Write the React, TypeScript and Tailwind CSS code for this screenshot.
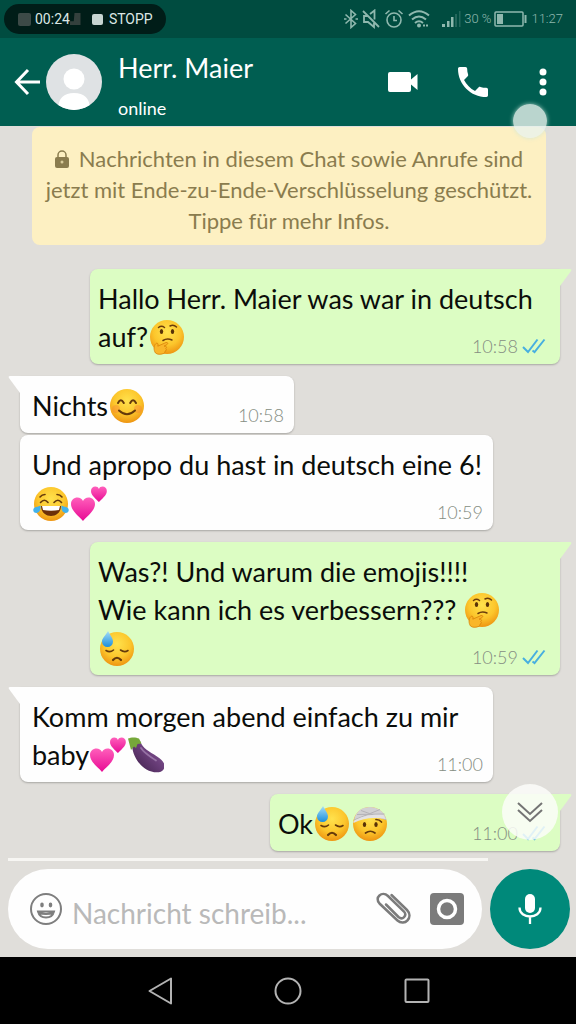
import React from 'react';

// --- Types ---
type EmojiName = 'thinking' | 'smile' | 'joy' | 'hearts' | 'sweat' | 'bandage' | 'eggplant';
type Part = string | { emoji: EmojiName };

interface Message {
  id: number;
  own: boolean;
  tail: boolean;
  time: string;
  width: string;
  spacing: string;
  lines: Part[][];
}

// --- Content ---
const e = (emoji: EmojiName): Part => ({ emoji });

const MESSAGES: Message[] = [
  {
    id: 1, own: true, tail: true, time: '10:58', width: 'w-[470px]', spacing: 'mt-6',
    lines: [['Hallo Herr. Maier was war in deutsch'], ['auf?', e('thinking')]],
  },
  {
    id: 2, own: false, tail: true, time: '10:58', width: 'w-[274px]', spacing: 'mt-3',
    lines: [['Nichts', e('smile')]],
  },
  {
    id: 3, own: false, tail: false, time: '10:59', width: 'w-[473px]', spacing: 'mt-0.5',
    lines: [['Und apropo du hast in deutsch eine 6!'], [e('joy'), e('hearts')]],
  },
  {
    id: 4, own: true, tail: true, time: '10:59', width: 'w-[470px]', spacing: 'mt-3',
    lines: [
      ['Was?! Und warum die emojis!!!!'],
      ['Wie kann ich es verbessern??? ', e('thinking')],
      [e('sweat')],
    ],
  },
  {
    id: 5, own: false, tail: true, time: '11:00', width: 'w-[473px]', spacing: 'mt-3',
    lines: [['Komm morgen abend einfach zu mir'], ['baby', e('hearts'), e('eggplant')]],
  },
  {
    id: 6, own: true, tail: true, time: '11:00', width: 'w-[290px]', spacing: 'mt-3',
    lines: [['Ok', e('sweat'), e('bandage')]],
  },
];

// --- Emojis ---
const Gradients = () => (
  <svg className="absolute h-0 w-0" aria-hidden="true">
    <defs>
      <radialGradient id="face" cx="50%" cy="35%" r="65%">
        <stop offset="0" stopColor="#ffe24d" />
        <stop offset="0.6" stopColor="#fcc62c" />
        <stop offset="1" stopColor="#ee9512" />
      </radialGradient>
      <linearGradient id="heart" x1="0" y1="0" x2="0" y2="1">
        <stop offset="0" stopColor="#ff5fbb" />
        <stop offset="1" stopColor="#e80a94" />
      </linearGradient>
      <linearGradient id="drop" x1="0" y1="0" x2="0" y2="1">
        <stop offset="0" stopColor="#a5def8" />
        <stop offset="1" stopColor="#1c8fdc" />
      </linearGradient>
      <linearGradient id="plum" x1="0" y1="1" x2="1" y2="0">
        <stop offset="0" stopColor="#3b1d45" />
        <stop offset="0.55" stopColor="#6b3f7b" />
        <stop offset="1" stopColor="#8d62a0" />
      </linearGradient>
    </defs>
  </svg>
);

const Face = () => <circle cx="18" cy="18" r="17" fill="url(#face)" />;
const HEART = 'M12 35C8 30 0 25 0 18C0 14 3 11.500 6.500 11.500c2.500 0 4.500 1.300 5.500 3.500c1-2.200 3-3.500 5.500-3.500c3.500 0 6.500 2.500 6.500 6.500C24 25 16 30 12 35z';

const DRAWINGS: Record<EmojiName, React.ReactNode> = {
  thinking: (
    <>
      <Face />
      <g fill="none" stroke="#6b3d0c" strokeLinecap="round" strokeWidth="1.500">
        <path d="M9.500 8.500q3-2.500 6 0" />
        <path d="M21 7q3.500-2 6.500 1" />
        <path d="M14 21.500q4-2.500 9-.5" />
      </g>
      <ellipse cx="12.500" cy="12.500" rx="1.700" ry="2.500" fill="#593207" />
      <ellipse cx="23.500" cy="12.500" rx="1.700" ry="2.500" fill="#593207" />
      <path
        d="M6.500 34c-2-3-2-7 .5-9.500c1-1 2.300 0 2 1.500l-.2 1.200L17 23.500c1.800-.6 2.500 1.300 1 2.100l-3 1.600c2.500-.4 3.200 1.300 1.700 2.300c1.300 1 .5 2.300-.7 2.700c.2 1.300-.7 2.100-2 2.500c-2.500.8-5.500 1-7.500-.7z"
        fill="#f9b62a"
        stroke="#d98309"
        strokeWidth="0.800"
      />
    </>
  ),
  smile: (
    <>
      <Face />
      <circle cx="7" cy="21" r="4" fill="#f5773a" opacity="0.350" />
      <circle cx="29" cy="21" r="4" fill="#f5773a" opacity="0.350" />
      <g fill="none" stroke="#653a0b" strokeLinecap="round" strokeWidth="2">
        <path d="M9 15q2.800-5.500 5.800 0" />
        <path d="M21.200 15q2.800-5.500 5.800 0" />
        <path d="M10 22.500q8 7.500 16 0" />
      </g>
    </>
  ),
  joy: (
    <>
      <Face />
      <g fill="none" stroke="#653a0b" strokeLinecap="round" strokeWidth="1.600">
        <path d="M7 11q2-2.500 5-2.500" />
        <path d="M24 8.500q3 0 5 2.500" />
        <path d="M7.500 16.500q4-4.500 7.500 0" />
        <path d="M21 16.500q4-4.500 7.500 0" />
      </g>
      <path d="M8 20h20c0 6-4.500 10-10 10S8 26 8 20z" fill="#6d2f09" />
      <path d="M9 20h18l-1 4q-8 1.500-16 0z" fill="#fff" />
      <path d="M7.500 19.500c.5 4-1 7.500-4 7.500c-2.500 0-3.800-2-3-4c.8-2.200 4-1.800 7-3.500z" fill="#43b2ec" />
      <path d="M28.500 19.500c-.5 4 1 7.500 4 7.500c2.500 0 3.800-2 3-4c-.8-2.200-4-1.800-7-3.500z" fill="#43b2ec" />
    </>
  ),
  hearts: (
    <>
      <path d={HEART} fill="url(#heart)" />
      <path d={HEART} fill="url(#heart)" transform="translate(20 -7) scale(.66)" />
    </>
  ),
  sweat: (
    <>
      <Face />
      <g fill="none" stroke="#653a0b" strokeLinecap="round" strokeWidth="1.600">
        <path d="M7 19.500q4 2.500 7.500-.5" />
        <path d="M21.500 19q4 3 7.500.5" />
        <path d="M14 29q4-4.500 8 0" strokeWidth="2.200" />
      </g>
      <path d="M9 0c2 4 5 7 5 10.500a5.500 5.500 0 0 1-11 0C3 7 7 4 9 0z" fill="url(#drop)" />
    </>
  ),
  bandage: (
    <>
      <Face />
      <path d="M2 14C3.500 5.500 10 1 18 1c8.500 0 15 5.500 16.500 13L27 11.500L12 11z" fill="#d2d1d3" />
      <path d="M2 14L28 3.500M5 8.500L32.500 8M9 4.500L34 13.500" fill="none" stroke="#b4b2b7" strokeWidth="1" />
      <path d="M1.500 15c8-4.500 16-7 30-6l2 4c-12-2-22-1-32 4z" fill="#e3e2e4" />
      <ellipse cx="12.500" cy="18.500" rx="1.700" ry="2.500" fill="#593207" />
      <ellipse cx="24" cy="18.500" rx="1.700" ry="2.500" fill="#593207" />
      <path d="M24 13.500q3.500 0 5.500 2.500M13.500 27q5-3.500 9.500 0" fill="none" stroke="#653a0b" strokeLinecap="round" strokeWidth="1.700" />
    </>
  ),
  eggplant: (
    <>
      <path d="M4 9L12 4C15 12 21 14 29 19.500c7 4.500 9 9 6.500 13c-2.500 4-11 3.500-17 0C11 28 5 19 4 9z" fill="url(#plum)" />
      <path d="M13 11c4 6 9 8 15 12.500" fill="none" stroke="#b495c2" strokeLinecap="round" strokeWidth="1.800" opacity="0.600" />
      <path d="M0 1.500C3 0 8 0 11 1.500l2.500 5L9.500 7L8 11l-2-1.500L3 13z" fill="#76a83a" />
    </>
  ),
};

const Emoji = ({ name }: { name: EmojiName }) => (
  <svg viewBox="0 0 36 36" className="mx-px h-9 w-9 shrink-0" role="img" aria-label={name}>
    {DRAWINGS[name]}
  </svg>
);

// --- Messages ---
const Ticks = () => (
  <svg viewBox="0 0 24 16" className="h-4 w-6" fill="none" stroke="#47afe0" strokeWidth="2">
    <path d="M1 9l5 5L15.500 1.500M10.500 12.500l2 1.500L22.500 1.500" />
  </svg>
);

const Bubble = ({ message }: { message: Message }) => {
  const { own, tail, time, width, spacing, lines } = message;

  return (
    <li
      className={`relative max-w-full rounded-lg pt-[11px] pb-2 text-[27px] leading-[38px] text-[#0b0d0a] shadow-[0_1px_2px_rgba(0,0,0,0.25)] ${width} ${spacing} ${
        own ? 'self-end bg-[#dcfdc3] pr-[14px] pl-2' : 'self-start bg-[#fefefe] pr-[10px] pl-3'
      } ${tail ? (own ? 'rounded-tr-none' : 'rounded-tl-none') : ''}`}
    >
      {tail && (
        <svg
          viewBox="0 0 12 18"
          className={`absolute top-0 h-[18px] w-3 ${own ? 'left-full text-[#dcfdc3]' : 'right-full -scale-x-100 text-[#fefefe]'}`}
        >
          <path d="M0 0h10q2 0 1 2L0 17z" fill="currentColor" />
        </svg>
      )}
      {lines.map((parts, i) => (
        <div key={i} className="flex min-h-[38px] items-end justify-between">
          <p className="flex items-center whitespace-pre">
            {parts.map((part, j) =>
              typeof part === 'string' ? <span key={j}>{part}</span> : <Emoji key={j} name={part.emoji} />
            )}
          </p>
          {i === lines.length - 1 && (
            <span className="flex items-center gap-1 text-lg leading-5 font-light text-[#858d82]">
              <time>{time}</time>
              {own && <Ticks />}
            </span>
          )}
        </div>
      ))}
    </li>
  );
};

// --- Bars ---
const StatusBar = () => (
  <div className="flex h-[38px] items-center justify-between bg-[#004c40] pr-[13px] pl-1 text-[#8fb8ae]">
    <button className="flex h-[30px] w-[162px] items-center rounded-full bg-[#001d18] pl-[14px] text-[#dbe7e4]">
      <span className="h-[13px] w-[13px] rounded-xs bg-[#3c4a47]" />
      <span className="ml-1 font-[Roboto] text-sm">00:24</span>
      <svg viewBox="0 0 16 18" className="h-[18px] w-3" fill="#34403d">
        <path d="M6 1h8v16H0v-5h5z" />
      </svg>
      <span className="ml-[10px] h-[11px] w-[11px] rounded-xs bg-[#c7d5d2]" />
      <span className="ml-[6px] font-[Roboto] text-sm">STOPP</span>
    </button>

    <div className="flex items-center gap-[3px]">
      <svg viewBox="0 0 14 20" className="h-5 w-[14px]" fill="none" stroke="currentColor" strokeWidth="1.600">
        <path d="M1.500 5.500l10 9L7 18.500V1.500l4.500 4l-10 9M0 10h2.500M11.500 10H14" />
      </svg>
      <svg viewBox="0 0 20 20" className="h-5 w-5" fill="none" stroke="currentColor" strokeWidth="1.800">
        <path d="M2 2l16 16M6.500 7H3v6h4l6 5v-4M9 5l4.500-3.500v9" />
      </svg>
      <svg viewBox="0 0 20 20" className="h-5 w-5" fill="none" stroke="currentColor" strokeWidth="1.600">
        <circle cx="10" cy="11" r="7" />
        <path d="M10 7v4.500h3M1.500 5l4-3.500M18.500 5l-4-3.500" />
      </svg>
      <svg viewBox="0 0 22 20" className="ml-px h-5 w-[22px]" fill="none" stroke="currentColor" strokeWidth="2">
        <path d="M1 6.500q10-8.500 20 0M4 10.500q7-6 14 0M7 14q4-3.500 8 0" />
        <circle cx="11" cy="16.500" r="1" fill="currentColor" />
        <path d="M15 16.500h5" strokeDasharray="2 1" />
      </svg>
      <svg viewBox="0 0 20 18" className="ml-2 h-[18px] w-5" fill="currentColor">
        <path d="M1 14h3v3H1zM6 11h2.500v6H6zM10 7h2.500v10H10z" />
        <path d="M14 4h2v13h-2zM18 1h1.500v16H18z" opacity="0.250" />
      </svg>
      <span className="font-[Roboto] text-[13px] font-light">30 %</span>
      <svg viewBox="0 0 34 16" className="h-4 w-[34px]" fill="none" stroke="currentColor" strokeWidth="1.500">
        <rect x="1" y="1" width="28" height="14" rx="1" />
        <path d="M31.500 4v8" strokeWidth="2" />
        <rect x="3" y="3" width="6" height="10" fill="currentColor" stroke="none" />
      </svg>
      <span className="font-[Roboto] text-[13px] font-light">11:27</span>
    </div>
  </div>
);

const Header = () => (
  <header className="relative flex h-[88px] items-center bg-[#005e51] pr-[26px] pl-[14px] text-white">
    <button aria-label="Zurück">
      <svg viewBox="0 0 28 28" className="h-7 w-7" fill="none" stroke="currentColor" strokeWidth="3">
        <path d="M26 14H3M14 2L2.500 14L14 26" />
      </svg>
    </button>
    <svg viewBox="0 0 56 56" className="ml-1 h-14 w-14 rounded-full bg-[#dfe2e4]" fill="#fff">
      <circle cx="28" cy="25" r="10.500" />
      <path d="M12 56c0-12 6-17 16-17s16 5 16 17z" />
    </svg>
    <div className="ml-4 flex-1 pt-3">
      <h1 className="text-[27px] leading-9">Herr. Maier</h1>
      <p className="mt-1 text-lg leading-9">online</p>
    </div>
    <button aria-label="Videoanruf">
      <svg viewBox="0 0 30 22" className="h-[22px] w-[30px]" fill="currentColor">
        <path d="M2 1h19q2 0 2 2v5.500L29.500 3v16L23 13.500V19q0 2-2 2H2q-2 0-2-2V3q0-2 2-2z" />
      </svg>
    </button>
    <button aria-label="Anrufen" className="ml-10">
      <svg viewBox="3 3 18 18" className="h-[30px] w-[30px]" fill="currentColor">
        <path d="M6.620 10.790c1.440 2.830 3.760 5.140 6.590 6.590l2.200-2.200c.27-.27.67-.36 1.020-.24 1.120.37 2.330.57 3.570.57.55 0 1 .45 1 1V20c0 .55-.45 1-1 1-9.390 0-17-7.610-17-17 0-.55.45-1 1-1h3.500c.55 0 1 .45 1 1 0 1.250.2 2.450.57 3.570.11.35.03.74-.25 1.020l-2.200 2.200z" />
      </svg>
    </button>
    <button aria-label="Mehr Optionen" className="ml-12">
      <svg viewBox="0 0 14 28" className="h-7 w-[14px]" fill="currentColor">
        <circle cx="7" cy="4" r="3.500" />
        <circle cx="7" cy="14" r="3.500" />
        <circle cx="7" cy="24" r="3.500" />
      </svg>
    </button>
    <span className="absolute right-[29px] -bottom-3 z-10 h-[34px] w-[34px] rounded-full bg-[#e8f2ee]/80 shadow-[0_0_4px_rgba(200,230,220,0.8)]" />
  </header>
);

const Composer = () => (
  <footer className="px-2 pb-2">
    <div className="mr-20 h-[3px] bg-[#f7f6f3]" />
    <div className="mt-2 -mr-[2px] flex items-center gap-2">
      <div className="flex h-20 min-w-0 flex-1 items-center rounded-full bg-[#fefefe] pr-[18px] pl-[22px]">
        <button aria-label="Emoji">
          <svg viewBox="0 0 32 32" className="h-8 w-8" fill="none" stroke="#7e7e7e" strokeWidth="2">
            <circle cx="16" cy="16" r="15" />
            <ellipse cx="12" cy="12" rx="1.800" ry="2.400" fill="#7e7e7e" stroke="none" />
            <ellipse cx="20.500" cy="12" rx="1.800" ry="2.400" fill="#7e7e7e" stroke="none" />
            <path d="M8 18.500h16q-1.500 6-8 6t-8-6zM8 19.500q8 3 16 0" />
          </svg>
        </button>
        <input
          type="text"
          aria-label="Nachricht"
          placeholder="Nachricht schreib..."
          className="ml-[10px] w-full min-w-0 flex-1 bg-transparent pt-2 text-[28px] leading-9 outline-none placeholder:text-[#b9b9b9]"
        />
        <button aria-label="Anhang" className="shrink-0">
          <svg viewBox="0 0 36 34" className="h-[34px] w-9" fill="none" stroke="#7b7b7b" strokeLinecap="round" strokeWidth="2.500">
            <path d="M15.500 3L31 18c7 7-2.500 17-9.500 10.500L3.500 11.500C-2 5.500 6 -1.500 12 4L28 19.500c3.500 4-1.500 9-5.500 5.500L10 12.500" />
          </svg>
        </button>
        <button aria-label="Kamera" className="ml-[18px] shrink-0">
          <svg viewBox="0 0 34 32" className="h-8 w-[34px]">
            <rect width="34" height="32" rx="4" fill="#7b7b7b" />
            <circle cx="17" cy="16" r="8.500" fill="none" stroke="#fff" strokeWidth="3.500" />
          </svg>
        </button>
      </div>
      <button aria-label="Sprachnachricht" className="flex h-20 w-20 shrink-0 items-center justify-center rounded-full bg-[#00897a]">
        <svg viewBox="0 0 24 32" className="h-8 w-6" fill="none" stroke="#fff" strokeWidth="2.300">
          <rect x="7" y="1" width="10" height="19" rx="5" fill="#fff" stroke="none" />
          <path d="M1.500 14.500c0 12 21 12 21 0M12 23.500V31" />
        </svg>
      </button>
    </div>
  </footer>
);

const NavBar = () => (
  <nav className="flex h-[67px] items-center justify-center gap-[100px] bg-black text-[#b3b3b3]">
    <button aria-label="Zurück">
      <svg viewBox="0 0 28 28" className="h-7 w-7" fill="none" stroke="currentColor" strokeLinejoin="round" strokeWidth="2">
        <path d="M25 1.500v25L3.500 14z" />
      </svg>
    </button>
    <button aria-label="Startseite">
      <svg viewBox="0 0 28 28" className="h-7 w-7" fill="none" stroke="currentColor" strokeWidth="2">
        <circle cx="14" cy="14" r="12.500" />
      </svg>
    </button>
    <button aria-label="Übersicht">
      <svg viewBox="0 0 28 28" className="h-7 w-7" fill="none" stroke="currentColor" strokeWidth="2">
        <rect x="3.500" y="2.500" width="23" height="22.500" rx="1" />
      </svg>
    </button>
  </nav>
);

export default function App() {
  return (
    <div className="relative flex min-h-screen flex-col bg-[#e0deda] font-[Lato,sans-serif]">
      <Gradients />
      <StatusBar />
      <Header />

      <main className="relative flex-1 pr-4 pl-5">
        <p className="mt-px mr-[14px] ml-3 rounded-lg bg-[#fdf0c2] px-3 pt-4 pb-[9px] text-center text-[22px] leading-[31px] text-[#8a7c4e]">
          <svg viewBox="0 0 14 18" className="mr-[10px] mb-1 inline h-[18px] w-[14px]">
            <rect y="7" width="14" height="11" rx="2" fill="#8a7c4e" />
            <path d="M3 8V5a4 4 0 0 1 8 0v3" fill="none" stroke="#8a7c4e" strokeWidth="1.500" />
            <circle cx="7" cy="12" r="1.500" fill="#d9cc9b" />
          </svg>
          Nachrichten in diesem Chat sowie Anrufe sind jetzt mit Ende-zu-Ende-Verschlüsselung geschützt. Tippe für mehr Infos.
        </p>

        <ul className="flex flex-col">
          {MESSAGES.map(message => (
            <Bubble key={message.id} message={message} />
          ))}
        </ul>

        <button
          aria-label="Nach unten"
          className="absolute right-[18px] bottom-[18px] flex h-14 w-14 items-center justify-center rounded-full bg-[#fbfdf9]/85"
        >
          <svg viewBox="0 0 26 22" className="h-[22px] w-[26px]" fill="none" stroke="#747474" strokeWidth="2">
            <path d="M1 2l12 11L25 2M1 9l12 11L25 9" />
          </svg>
        </button>
      </main>

      <Composer />
      <NavBar />
    </div>
  );
}
